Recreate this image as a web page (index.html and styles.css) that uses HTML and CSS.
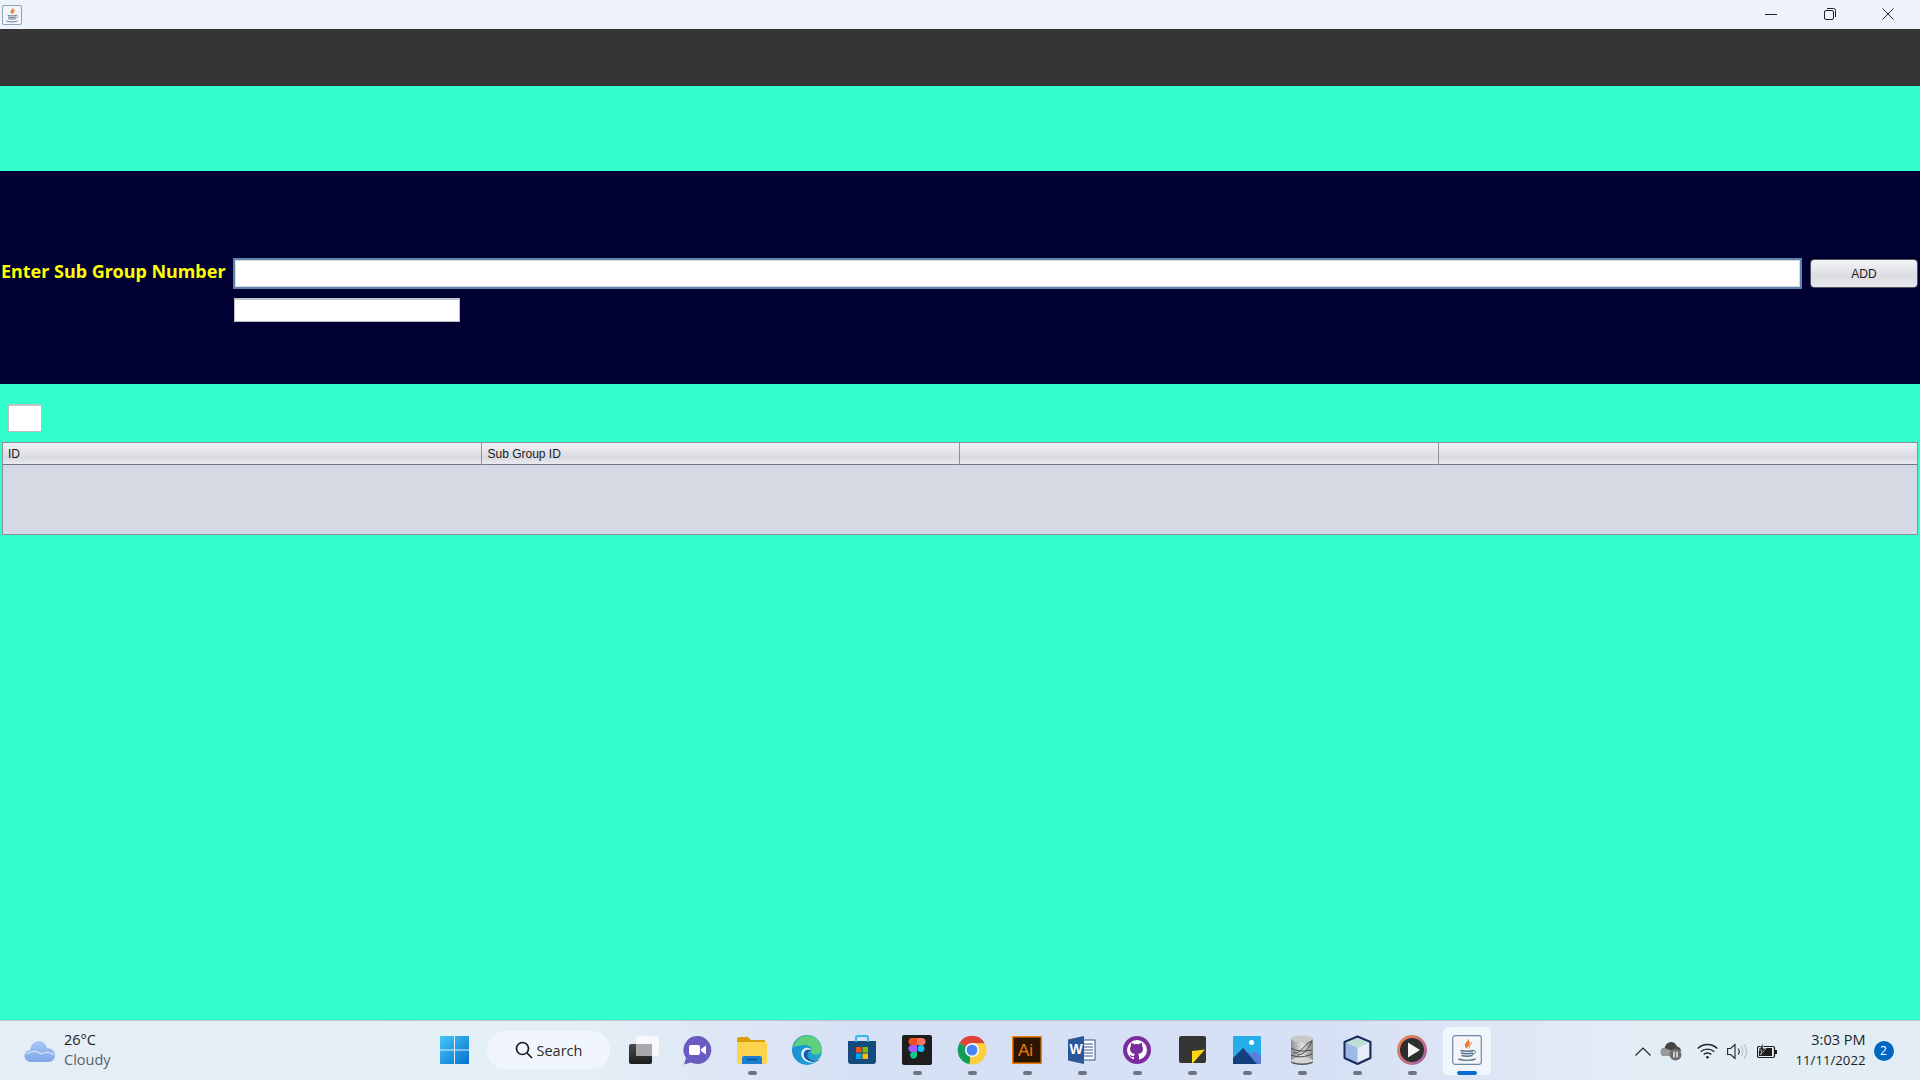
FILE: index.html
```html
<!DOCTYPE html>
<html>
  <head>
    <meta charset="utf-8">
    <title>Sub Group</title>
    <link rel="stylesheet" href="styles.css">
  </head>
  <body>
    <svg class="defs" width="0" height="0">
      <symbol id="java" viewBox="0 0 30 30">
        <rect x="0.7" y="0.7" width="28.6" height="28.6" rx="2.5" fill="#f3f5f8" stroke="#6f8ba3" stroke-width="1.2"/>
        <path d="M16 2.500c2 3-4 5-3 8.500.3 1 1 2 2 3-.5-2 4-3.500 2.500-7-.5-1.500-1-3-1.500-4.500z" fill="#e8792b"/>
        <path d="M19.500 7c.5 2-3 3-2 6.500" fill="none" stroke="#ee9050" stroke-width="1.100"/>
        <path d="M8.500 15.500c3 1 10 1 13 0M9 18c3 .8 9 .8 12 0M9.500 20.500c3 .8 8 .8 11 0" fill="none" stroke="#56768f" stroke-width="1.400"/>
        <path d="M21 15.500c3.500-.7 3 3.500-1 4" fill="none" stroke="#56768f" stroke-width="1"/>
        <path d="M6.500 24c4 1.800 13 1.800 17 0" fill="none" stroke="#56768f" stroke-width="1.400"/>
      </symbol>
    </svg>

    <div class="app">
      <div class="titlebar">
        <svg class="app-icon" width="20" height="20"><use href="#java"/></svg>
        <div class="win-btns">
          <svg width="12" height="12" viewBox="0 0 12 12"><path d="M0 6.500h12" stroke="#222" stroke-width="1"/></svg>
          <svg width="12" height="12" viewBox="0 0 12 12" fill="none" stroke="#222"><rect x="0.500" y="2.500" width="9" height="9" rx="1.500"/><path d="M3 .500h6.500a2 2 0 0 1 2 2V9"/></svg>
          <svg width="12" height="12" viewBox="0 0 12 12"><path d="M.5.500l11 11M11.500.500l-11 11" stroke="#222" stroke-width="1"/></svg>
        </div>
      </div>
      <div class="menubar"></div>
      <div class="band"></div>

      <div class="form-panel">
        <label class="form-label">Enter Sub Group Number</label>
        <input class="field field-main" type="text">
        <button class="btn">ADD</button>
        <input class="field field-small" type="text">
      </div>

      <div class="content">
        <input class="field field-search" type="text">
        <div class="table">
          <div class="thead">
            <div class="th">ID</div>
            <div class="th">Sub Group ID</div>
            <div class="th"></div>
            <div class="th"></div>
          </div>
          <div class="tbody"></div>
        </div>
      </div>

      <div class="taskbar">
        <div class="weather">
          <svg width="32" height="24" viewBox="0 0 32 24">
            <defs><linearGradient id="cl" x1="0" y1="0" x2="0" y2="1"><stop offset="0" stop-color="#a9c6f5"/><stop offset="1" stop-color="#7fa6e6"/></linearGradient></defs>
            <path d="M7 23a6 6 0 0 1-1-12c1-5 4-9 9-9 4 0 7 3 8 7 4 0 8 3 8 7.500 0 4-3 6.500-7 6.500z" fill="url(#cl)"/>
            <path d="M2 15c6-4 12-3 15 0 4-2 9-2 13 1" fill="none" stroke="#d5e3fa" stroke-width="1.200"/>
          </svg>
          <div class="weather-text">
            <div>26°C</div>
            <div class="weather-sub">Cloudy</div>
          </div>
        </div>

        <div class="task-center">
          <div class="slot">
            <svg width="30" height="30" viewBox="0 0 30 30">
              <defs><linearGradient id="win" x1="0" y1="0" x2="1" y2="1"><stop offset="0" stop-color="#45c8f8"/><stop offset="1" stop-color="#0670d0"/></linearGradient></defs>
              <path d="M0 1h14v13.500H0zM15 1h14v13.500H15zM0 15.500h14V29H0zM15 15.500h14V29H15z" fill="url(#win)"/>
            </svg>
          </div>
          <div class="search">
            <svg width="18" height="18" viewBox="0 0 18 18" fill="none" stroke="#1c1c1c" stroke-width="1.700"><circle cx="7.500" cy="7.500" r="6"/><path d="M12 12l5 5"/></svg>
            <span>Search</span>
          </div>
          <div class="slot">
            <svg class="taskview" width="32" height="30" viewBox="0 0 32 30">
              <defs><linearGradient id="tv" x1="0" y1="0" x2="0" y2="1"><stop offset="0" stop-color="#4a4a4a"/><stop offset="1" stop-color="#1c1c1c"/></linearGradient></defs>
              <rect x="1" y="9" width="23" height="20" rx="2" fill="url(#tv)"/>
              <rect x="8" y="1" width="23" height="20" rx="2" fill="#f7f8fb"/>
              <rect x="8" y="9" width="16" height="12" fill="#a8a8aa"/>
            </svg>
          </div>
          <div class="slot">
            <svg width="30" height="30" viewBox="0 0 30 30">
              <path d="M15 1a14 14 0 1 1-6 26.500L2 29.500l2-6.500A14 14 0 0 1 15 1z" fill="#6a5bc0"/>
              <rect x="7" y="10" width="11" height="10" rx="2" fill="#fff"/>
              <path d="M19 14l5-3.500v9L19 16z" fill="#fff"/>
            </svg>
          </div>
          <div class="slot open">
            <svg width="30" height="28" viewBox="0 0 30 28">
              <path d="M0 3a2 2 0 0 1 2-2h9l3 3h14v5H0z" fill="#d9a00e"/>
              <path d="M0 6h28a2 2 0 0 1 2 2v18a2 2 0 0 1-2 2H2a2 2 0 0 1-2-2z" fill="#fbd34d"/>
              <path d="M5 28v-6a2 2 0 0 1 2-2h16a2 2 0 0 1 2 2v6z" fill="#1a7fd0"/>
              <path d="M10 23.500h10" stroke="#0b4f94" stroke-width="1.500"/>
            </svg>
          </div>
          <div class="slot">
            <svg width="30" height="30" viewBox="0 0 30 30">
              <defs>
                <linearGradient id="ed1" x1="0" y1="0" x2="1" y2="0"><stop offset="0" stop-color="#1a8fd6"/><stop offset="1" stop-color="#1fa8c8"/></linearGradient>
              </defs>
              <circle cx="15" cy="15" r="15" fill="url(#ed1)"/>
              <path d="M1 13C3 5 9 .5 15 .500c8 0 14.500 6 15 14.500 0 3-3 5-7 4.500-4 0-5-2.500-3-4 .5-3-3-6-8-5.500C7 10.500 3 11 1 13z" fill="#5fd17a"/>
              <path d="M20 15.500c-2-3.500-7-3.500-9.500-.5-3 4-.5 11 7 12.500 3 .5 7-.3 10-3-5 2-12 1-13-3.500-.5-2.500 2.500-4 5.500-5.500z" fill="#e9f2fa"/>
              <path d="M20 15.500c-3-2-7-1-8 2-1.500 4 2 9 9 9.500 3 0 5-1 7-2.500-5 2-11 1-12.500-3-1-3 1.500-5 4.500-6z" fill="#0f5fa8"/>
            </svg>
          </div>
          <div class="slot">
            <svg width="30" height="30" viewBox="0 0 30 30">
              <path d="M1 6h28v20a3 3 0 0 1-3 3H4a3 3 0 0 1-3-3z" fill="#154a7d"/>
              <path d="M9 7V3a2 2 0 0 1 2-2h8a2 2 0 0 1 2 2v4" fill="none" stroke="#30b8ee" stroke-width="2"/>
              <rect x="9" y="12" width="5.500" height="5.500" fill="#f25022"/>
              <rect x="15.500" y="12" width="5.500" height="5.500" fill="#7fba00"/>
              <rect x="9" y="18.500" width="5.500" height="5.500" fill="#00a4ef"/>
              <rect x="15.500" y="18.500" width="5.500" height="5.500" fill="#ffb900"/>
            </svg>
          </div>
          <div class="slot open">
            <svg width="30" height="30" viewBox="0 0 30 30">
              <rect width="30" height="30" rx="2" fill="#1e1e1e"/>
              <path d="M10 3h5v7h-5a3.500 3.500 0 0 1 0-7z" fill="#f24e1e"/>
              <path d="M15 3h5a3.500 3.500 0 0 1 0 7h-5z" fill="#ff7262"/>
              <path d="M10 10h5v7h-5a3.500 3.500 0 0 1 0-7z" fill="#a259ff"/>
              <circle cx="19" cy="13.500" r="3.500" fill="#1abcfe"/>
              <path d="M10 17h5v3.500a3.500 3.500 0 1 1-5-3.500z" fill="#0acf83"/>
            </svg>
          </div>
          <div class="slot open">
            <svg width="30" height="30" viewBox="0 0 30 30">
              <path d="M15 15L2.500 8A14.500 14.500 0 0 1 28 8.500H15z" fill="#db4437"/>
              <path d="M15 15l-12.500-7a14.500 14.500 0 0 0 10 21.300z" fill="#0f9d58"/>
              <path d="M15 8.500h13a14.500 14.500 0 0 1-15.500 20.800z" fill="#ffcd40"/>
              <circle cx="15" cy="15" r="7" fill="#fff"/>
              <circle cx="15" cy="15" r="5.500" fill="#4285f4"/>
            </svg>
          </div>
          <div class="slot open">
            <svg width="30" height="28" viewBox="0 0 30 28">
              <rect x="0.500" y="0.500" width="29" height="27" fill="#2e1500" stroke="#ee7e0a" stroke-width="2"/>
              <text x="6" y="20" class="ai-text">Ai</text>
            </svg>
          </div>
          <div class="slot open">
            <svg width="28" height="28" viewBox="0 0 28 28">
              <rect x="11" y="4" width="16" height="20" fill="#fff" stroke="#2b579a"/>
              <path d="M15 8h10M15 11h10M15 14h10M15 17h10M15 20h10" stroke="#2b579a"/>
              <path d="M0 3.500L16 0v28L0 24.500z" fill="#2b579a"/>
              <text x="1.500" y="18" class="word-text">W</text>
            </svg>
          </div>
          <div class="slot open">
            <svg width="28" height="28" viewBox="0 0 28 28">
              <circle cx="14" cy="14" r="12" fill="#fff" stroke="#7b2d9e" stroke-width="4"/>
              <path d="M11 24v-3c-3 .6-4-1-4.500-2 2 .5 2.500 1.500 4.500 1 0-1 .5-1.500 1-2-3-.5-5-2-5-5 0-1.200.4-2.300 1-3-.2-.8-.2-2 .2-3 1.200 0 2.300.7 3 1.300a9 9 0 0 1 4.600 0c.7-.6 1.800-1.300 3-1.300.4 1 .4 2.200.2 3 .6.700 1 1.800 1 3 0 3-2 4.500-5 5 .6.500 1 1.300 1 2.500V24z" fill="#7b2d9e"/>
            </svg>
          </div>
          <div class="slot open">
            <svg width="27" height="27" viewBox="0 0 27 27">
              <rect width="27" height="27" rx="2" fill="#353535"/>
              <path d="M13 15l13-1.500L14 27h-1z" fill="#fcd319"/>
            </svg>
          </div>
          <div class="slot open">
            <svg width="28" height="28" viewBox="0 0 28 28">
              <rect width="28" height="28" rx="1" fill="#27aee8"/>
              <circle cx="18.500" cy="6.500" r="2.500" fill="#fff"/>
              <path d="M0 24L10 12l8 6 4-3 6 5v8H0z" fill="#5b7fd8"/>
              <path d="M0 22l10-10 14 16H0z" fill="#123f7e"/>
            </svg>
          </div>
          <div class="slot open">
            <svg width="24" height="30" viewBox="0 0 24 30">
              <defs><linearGradient id="db" x1="0" y1="0" x2="1" y2="0"><stop offset="0" stop-color="#8d8d8d"/><stop offset=".5" stop-color="#e0e0e0"/><stop offset="1" stop-color="#8a8a8a"/></linearGradient></defs>
              <rect x="1" y="3" width="22" height="24" fill="url(#db)"/>
              <ellipse cx="12" cy="4" rx="11" ry="3.500" fill="#c8c8c8"/>
              <ellipse cx="12" cy="27" rx="11" ry="3" fill="#555"/>
              <ellipse cx="12" cy="25.500" rx="11" ry="3" fill="#d5d5d5"/>
              <path d="M3 17c6 5 12-9 19-11-3 7-8 14-15 14M1 13c5 3 10 4 21 2M1 20c8 3 14 2 21-1" fill="none" stroke="#444" stroke-width="1"/>
            </svg>
          </div>
          <div class="slot open">
            <svg width="29" height="30" viewBox="0 0 29 30">
              <path d="M14.500 1.500L27.500 7v16l-13 6-13-6V7z" fill="#9ab8e8" stroke="#1d2a58" stroke-width="2" stroke-linejoin="round"/>
              <path d="M14.500 3L26 7.500 14.500 13 3 7.500z" fill="#bfe0d4"/>
              <path d="M14.500 13L26 7.500V22l-11.500 5.500z" fill="#e8ecf4"/>
            </svg>
          </div>
          <div class="slot open">
            <svg width="30" height="30" viewBox="0 0 30 30">
              <defs><linearGradient id="pl" x1="0" y1="0" x2="1" y2="1"><stop offset="0" stop-color="#f58a3c"/><stop offset="1" stop-color="#9a5bb8"/></linearGradient></defs>
              <circle cx="15" cy="15" r="15" fill="url(#pl)"/>
              <circle cx="15" cy="15" r="12" fill="#2e2e2e"/>
              <path d="M11 7.500L23 15l-12 7.500z" fill="#f4f4f4"/>
            </svg>
          </div>
          <div class="slot active">
            <svg width="30" height="30"><use href="#java"/></svg>
          </div>
        </div>

        <div class="tray">
          <svg class="tray-caret" width="16" height="9" viewBox="0 0 16 9"><path d="M.5 8.500L8 1l7.500 7.500" fill="none" stroke="#222" stroke-width="1.200"/></svg>
          <svg class="tray-cloud" width="22" height="20" viewBox="0 0 22 20">
            <path d="M5 15a4 4 0 0 1-.5-8C5.500 3 8 1 11 1c3 0 5 2 6 4.500 2 .2 4 2 4 4.500H13a5 5 0 0 0-3 5z" fill="#444"/>
            <path d="M5 15a4 4 0 0 1-.5-8L13 10a5 5 0 0 0-3 5z" fill="#9a9a9a"/>
            <circle cx="15.500" cy="13.500" r="6" fill="#6e6e6e"/>
            <path d="M14 10.500v6M17 10.500v6" stroke="#fff" stroke-width="1.300"/>
          </svg>
          <svg class="tray-wifi" width="21" height="16" viewBox="0 0 21 16" fill="none" stroke="#222" stroke-width="1.300"><path d="M.7 5.500a14 14 0 0 1 19.600 0M3.700 8.700a10 10 0 0 1 13.600 0M6.700 11.500a5.500 5.500 0 0 1 7.600 0"/><circle cx="10.500" cy="14.300" r="1.300" fill="#222" stroke="none"/></svg>
          <svg class="tray-vol" width="20" height="17" viewBox="0 0 20 17" fill="none" stroke="#222" stroke-width="1.100"><path d="M.6 5.500h3L8 1.500v14l-4.400-4h-3z"/><path d="M11 5.500a4.500 4.500 0 0 1 0 6" /><path d="M14 3.500a8 8 0 0 1 0 10M17 1.500a11 11 0 0 1 0 14" stroke="#b5b8bd"/></svg>
          <svg class="tray-batt" width="20" height="16" viewBox="0 0 20 16">
            <path d="M2 3.500h14a1.500 1.500 0 0 1 1.500 1.500v8a1.500 1.500 0 0 1-1.500 1.500H2A1.500 1.500 0 0 1 .5 13V5A1.500 1.500 0 0 1 2 3.500z" fill="none" stroke="#1c1c1c" stroke-width="1.200"/>
            <rect x="2" y="5" width="13" height="8" fill="#1c1c1c"/>
            <rect x="18" y="7" width="2" height="4" fill="#1c1c1c"/>
            <path d="M6 0L2 7h3l-1.500 5L9 5.500H6z" fill="#1c1c1c" stroke="#e4eef6" stroke-width=".6"/>
          </svg>
          <div class="clock">
            <div class="clock-time">3:03 PM</div>
            <div>11/11/2022</div>
          </div>
          <div class="badge">2</div>
        </div>
      </div>
    </div>
  </body>
</html>
```

FILE: styles.css
```css
* {
  margin: 0;
  padding: 0;
  box-sizing: border-box;
}
body {
  width: 1920px;
  height: 1080px;
  overflow: hidden;
  font-family: "Liberation Sans", Arial, sans-serif;
}
.defs {
  position: absolute;
}
.app {
  display: flex;
  flex-direction: column;
  height: 1080px;
  background: #33ffcc;
}

/* window frame */
.titlebar {
  height: 29px;
  background: #eef3fb;
  display: flex;
  align-items: center;
  justify-content: space-between;
  padding-left: 2px;
}
.app-icon {
  display: block;
}
.win-btns {
  display: flex;
  align-items: center;
  gap: 46.500px;
  padding-right: 26px;
  margin-top: -2px;
}
.win-btns svg {
  display: block;
}
.menubar {
  height: 57px;
  background: #353535;
}
.band {
  height: 85px;
}

/* form */
.form-panel {
  height: 213px;
  background: #000033;
  display: grid;
  grid-template-columns: 224px 1568px 108px;
  column-gap: 9px;
  row-gap: 9px;
  grid-template-rows: 31px 24px;
  padding: 87px 0 0 0;
  align-items: center;
}
.form-label {
  color: #ffff00;
  font-family: "Noto Sans", sans-serif;
  font-weight: bold;
  font-size: 18px;
  white-space: nowrap;
  padding-left: 1px;
  margin-top: -6px;
}
.field {
  display: block;
  background: #fff;
  border: 1px solid #b9bcc4;
  border-top: 2px solid #c4c6cc;
  outline: none;
}
.field-main {
  height: 31px;
  width: 1569px;
  border: 2px solid #5c82ad;
  box-shadow: inset 0 0 0 1px #d8dade;
}
.field-small {
  grid-column: 2;
  width: 226px;
  height: 24px;
  margin-left: 1px;
}
.btn {
  height: 29px;
  width: 108px;
  border: 1px solid #50525c;
  border-radius: 4px;
  background: linear-gradient(#f4f5f7, #dcdde3 60%, #e6e8ee);
  font-family: "Liberation Sans", Arial, sans-serif;
  font-size: 12px;
  color: #1a1a22;
}

/* table area */
.content {
  flex: 1;
  padding: 20px 2px 0 2px;
}
.field-search {
  width: 34px;
  height: 28px;
  margin-left: 6px;
}
.table {
  margin-top: 10px;
  border: 1px solid #8e8f9f;
  height: 93px;
  background: #d6d9e3;
}
.thead {
  display: grid;
  grid-template-columns: repeat(4, 1fr);
  height: 22px;
  border-bottom: 1px solid #74778a;
  background: linear-gradient(#f0f1f5, #d9dbe1 70%, #e9ebf1);
}
.th {
  font-size: 12px;
  line-height: 22px;
  color: #1a1a22;
  padding-left: 5px;
  border-right: 1px solid #8f9199;
}
.th + .th {
  padding-left: 6px;
}
.th:last-child {
  border-right: none;
}
.tbody {
  height: 69px;
}

/* taskbar */
.taskbar {
  height: 60px;
  display: grid;
  grid-template-columns: 427px auto 1fr;
  align-items: center;
  border-top: 1px solid #bcc3cc;
  background: linear-gradient(90deg, #e4eef6 0%, #e5eff6 30%, #d6e0f5 45%, #d7e1f5 70%, #e3edf6 85%, #e3edf6 100%);
}
.weather {
  display: flex;
  align-items: center;
  gap: 8px;
  padding-left: 24px;
  font-family: "Open Sans", sans-serif;
  font-size: 14.500px;
  line-height: 20px;
  color: #1c1c1c;
}
.weather-text {
  margin-top: -2px;
}
.weather-sub {
  color: #5b6068;
}
.task-center {
  display: flex;
  align-items: center;
  height: 60px;
}
.slot {
  position: relative;
  width: 55px;
  height: 60px;
  display: flex;
  align-items: center;
  justify-content: center;
  flex-shrink: 0;
}
.slot svg {
  display: block;
  margin-top: -3px;
}
.slot svg.taskview {
  margin-left: 4px;
}
.slot.open::after {
  content: "";
  position: absolute;
  left: 23px;
  bottom: 6px;
  width: 9px;
  height: 4px;
  border-radius: 2px;
  background: #6f7480;
}
.slot.active::before {
  content: "";
  position: absolute;
  left: 3px;
  top: 6px;
  width: 48px;
  height: 48px;
  border-radius: 5px;
  background: #f1f5fc;
}
.slot.active svg {
  position: relative;
}
.slot.active::after {
  content: "";
  position: absolute;
  left: 17px;
  bottom: 6px;
  width: 20px;
  height: 4px;
  border-radius: 2px;
  background: #0a6fd0;
}
.ai-text {
  font-family: "Liberation Sans", sans-serif;
  font-size: 17px;
  fill: #ee7e0a;
}
.word-text {
  font-family: "Liberation Sans", sans-serif;
  font-size: 14px;
  font-weight: bold;
  fill: #fff;
}
.search {
  width: 123px;
  height: 38px;
  margin: -2px 4.500px 0 5px;
  flex-shrink: 0;
  border-radius: 19px;
  background: #f1f5fd;
  display: flex;
  align-items: center;
  justify-content: center;
  gap: 4px;
  font-family: "Open Sans", sans-serif;
  font-size: 14.500px;
  color: #2a2a2a;
}
.tray {
  display: flex;
  align-items: center;
  height: 60px;
  padding-left: 140px;
}
.tray svg {
  display: block;
  flex-shrink: 0;
}
.tray-caret { margin-right: 9px; }
.tray-cloud { margin-right: 15px; }
.tray-wifi { margin-right: 9px; }
.tray-vol { margin-right: 10px; }
.clock {
  width: 88px;
  margin-left: 1px;
  text-align: right;
  font-family: "Open Sans", sans-serif;
  font-size: 13.200px;
  line-height: 20px;
  color: #1c1c1c;
  margin-top: -2px;
}
.clock-time {
  font-size: 14.500px;
}
.badge {
  width: 20px;
  height: 20px;
  margin-left: 8px;
  border-radius: 50%;
  background: #0067c0;
  color: #fff;
  font-family: "Open Sans", sans-serif;
  font-size: 12px;
  line-height: 20px;
  text-align: center;
}
```
